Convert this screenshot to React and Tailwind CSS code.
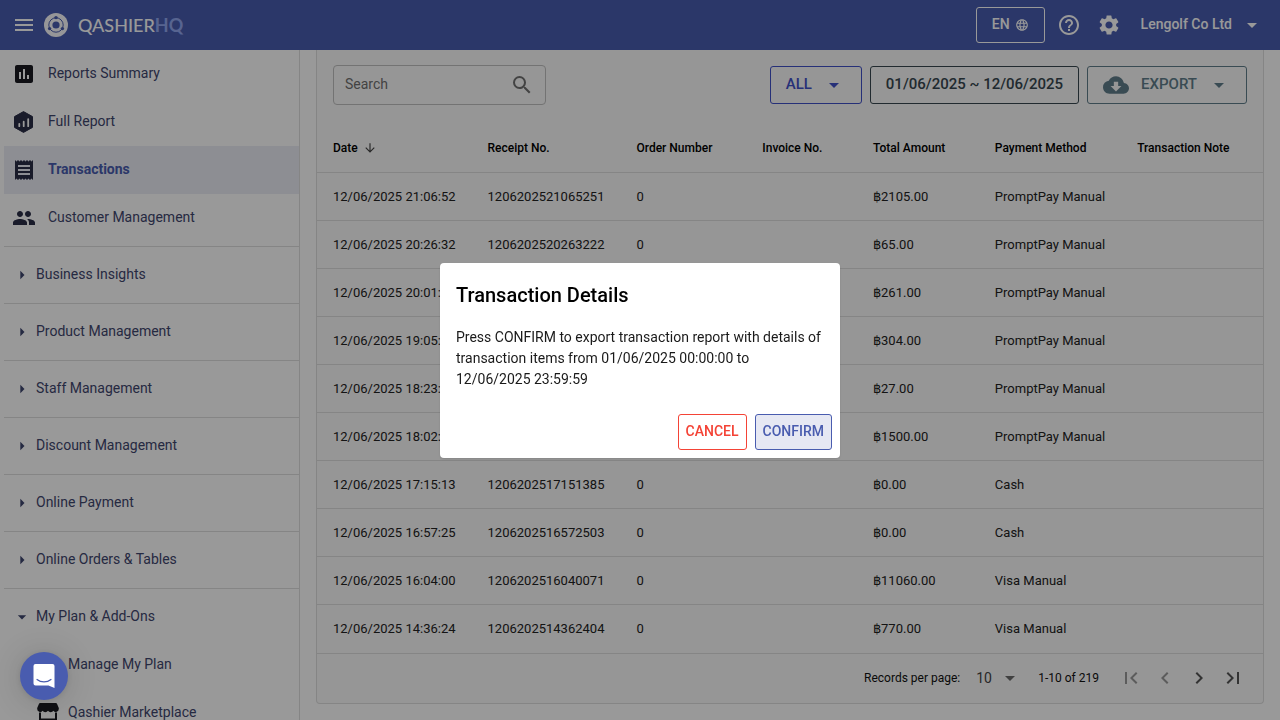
import {
  MdMenu, MdHelpOutline, MdSettings, MdArrowDropDown, MdArrowRight, MdLanguage, MdCloudDownload,
  MdSearch, MdArrowDownward, MdChevronLeft, MdChevronRight, MdFirstPage, MdLastPage,
  MdReceipt, MdPeople, MdAssessment,
} from "react-icons/md";

const rows = [
  ["12/06/2025 21:06:52", "1206202521065251", "0", "", "฿2105.00", "PromptPay Manual", ""],
  ["12/06/2025 20:26:32", "1206202520263222", "0", "", "฿65.00", "PromptPay Manual", ""],
  ["12/06/2025 20:01:44", "1206202520014418", "0", "", "฿261.00", "PromptPay Manual", ""],
  ["12/06/2025 19:05:12", "1206202519051237", "0", "", "฿304.00", "PromptPay Manual", ""],
  ["12/06/2025 18:23:36", "1206202518233640", "0", "", "฿27.00", "PromptPay Manual", ""],
  ["12/06/2025 18:02:20", "1206202518022061", "0", "", "฿1500.00", "PromptPay Manual", ""],
  ["12/06/2025 17:15:13", "1206202517151385", "0", "", "฿0.00", "Cash", ""],
  ["12/06/2025 16:57:25", "1206202516572503", "0", "", "฿0.00", "Cash", ""],
  ["12/06/2025 16:04:00", "1206202516040071", "0", "", "฿11060.00", "Visa Manual", ""],
  ["12/06/2025 14:36:24", "1206202514362404", "0", "", "฿770.00", "Visa Manual", ""],
];

const columns = ["Date", "Receipt No.", "Order Number", "Invoice No.", "Total Amount", "Payment Method", "Transaction Note"];

function HexReportIcon() {
  return (
    <svg viewBox="0 0 24 24" className="size-6 shrink-0" fill="none" aria-hidden="true">
      <path d="M11.5 1.600 20.500 6.600v10.800L11.500 22.400 2.500 17.400V6.600z" fill="#2a2d46" stroke="#2a2d46" strokeWidth="1" strokeLinejoin="round" />
      <path d="M7.300 13.800v2.400M11.700 11.700v4.500M16.200 9.200v7" stroke="#fff" strokeWidth="1.800" strokeLinecap="round" />
    </svg>
  );
}

function StoreIcon() {
  return (
    <svg viewBox="0 0 24 24" className="size-6 shrink-0" fill="#191a20" aria-hidden="true">
      <path d="M4.200 2h15.600c.6 0 1.100.3 1.300.9L22.800 7v1a3 3 0 0 1-5.400 1.800 3.200 3.200 0 0 1-5.400 0 3.200 3.200 0 0 1-5.400 0A3 3 0 0 1 1.200 8V7l1.700-4.100c.2-.6.7-.9 1.300-.9z" />
      <path d="M3 11.500h2v6h14v-6h2V22H3z" />
    </svg>
  );
}

function LogoMark() {
  return (
    <svg viewBox="0 0 24 24" className="size-6" aria-hidden="true">
      <circle cx="12" cy="12" r="12" fill="#fbfbfd" />
      <circle cx="12" cy="12" r="7.200" fill="none" stroke="#495caf" strokeWidth="1" />
      <circle cx="12" cy="12" r="3.600" fill="#495caf" />
      <circle cx="12" cy="4.600" r="1.700" fill="#495caf" />
      <circle cx="5.600" cy="15.600" r="1.700" fill="#495caf" />
      <circle cx="18.400" cy="15.600" r="1.700" fill="#495caf" />
    </svg>
  );
}

function NavItem({ icon, label, active, nested }) {
  return (
    <a
      href="#"
      aria-current={active ? "page" : undefined}
      className={`flex h-12 items-center pl-2 text-sm leading-5 ${nested ? "gap-2" : "gap-3"} ${active ? "bg-[#ebedf5] font-bold text-[#495caf]" : "text-[#3f466e]"}`}
    >
      {icon}
      <span className="pb-0.5">{label}</span>
    </a>
  );
}

function NavGroup({ label, open, children }) {
  return (
    <div className="border-t border-[#dedede] py-1">
      <button type="button" aria-expanded={!!open} className="flex h-12 w-full items-center gap-1 pl-2 text-sm leading-5 text-[#3f466e]">
        {open ? <MdArrowDropDown className="size-5" /> : <MdArrowRight className="size-5" />}
        <span className="pb-0.5">{label}</span>
      </button>
      {children}
    </div>
  );
}

function Header() {
  return (
    <header className="flex h-[50px] shrink-0 items-center justify-between bg-[#495caf] pr-4 pl-3 text-white">
      <div className="flex items-center">
        <button type="button" aria-label="Menu"><MdMenu className="size-6" /></button>
        <a href="#" className="flex items-center gap-[10px] pl-2 font-['Lato',sans-serif] text-lg font-medium">
          <LogoMark />
          <span>QASHIER<b className="text-[#91a7f0]">HQ</b></span>
        </a>
      </div>
      <div className="flex items-center gap-4 text-sm font-medium">
        <button type="button" className="flex h-9 items-center gap-[5px] rounded-[3px] border border-white px-[15px]">
          <span className="pb-0.5">EN</span> <MdLanguage className="size-[14px]" />
        </button>
        <button type="button" aria-label="Help" className="-ml-1"><MdHelpOutline className="size-6" /></button>
        <button type="button" aria-label="Settings"><MdSettings className="size-6" /></button>
        <button type="button" className="flex items-center gap-2 pl-1">
          <span className="pb-0.5">Lengolf Co Ltd</span> <MdArrowDropDown className="size-6" />
        </button>
      </div>
    </header>
  );
}

function Sidebar() {
  return (
    <nav className="w-[300px] shrink-0 overflow-hidden border-r border-[#dedede] bg-white pl-1">
      <div className="pb-1">
        <NavItem icon={<MdAssessment className="size-6 text-[#191a20]" />} label="Reports Summary" />
        <NavItem icon={<HexReportIcon />} label="Full Report" />
        <NavItem active icon={<MdReceipt className="size-6 text-[#2a2d46]" />} label="Transactions" />
        <NavItem icon={<MdPeople className="size-6 text-[#2a2d46]" />} label="Customer Management" />
      </div>
      <NavGroup label="Business Insights" />
      <NavGroup label="Product Management" />
      <NavGroup label="Staff Management" />
      <NavGroup label="Discount Management" />
      <NavGroup label="Online Payment" />
      <NavGroup label="Online Orders & Tables" />
      <NavGroup label="My Plan & Add-Ons" open>
        <div className="pl-6">
          <NavItem nested icon={<MdSettings className="size-6" />} label="Manage My Plan" />
          <NavItem nested icon={<StoreIcon />} label="Qashier Marketplace" />
        </div>
      </NavGroup>
    </nav>
  );
}

function Toolbar() {
  return (
    <div className="flex items-center justify-between px-4 pt-[15px] pb-[19px]">
      <label className="flex h-10 w-[213px] items-center justify-between rounded border border-[#c0c0c0] px-[11px] text-sm">
        <input type="search" aria-label="Search" placeholder="Search" className="w-32 bg-transparent pb-0.5 outline-none placeholder:text-[#707070]" />
        <MdSearch className="size-6 text-[#707070]" />
      </label>
      <div className="flex gap-2 text-[15px] font-medium">
        <button type="button" aria-haspopup="menu" className="flex h-[38px] items-center gap-[10px] rounded-[3px] border border-[#4050c8] px-[15px] text-[#4050c8]">
          <span className="pb-0.5">ALL</span> <MdArrowDropDown className="size-6" />
        </button>
        <button type="button" className="flex h-[38px] items-center rounded-[3px] border border-[#37474f] px-[15px] text-[#37474f]">
          <span className="pb-0.5">01/06/2025 ~ 12/06/2025</span>
        </button>
        <button type="button" aria-haspopup="menu" className="flex h-[38px] items-center rounded-[3px] border border-[#607d8b] px-[15px] text-[#607d8b]">
          <MdCloudDownload className="size-[26px]" />
          <span className="pr-[10px] pb-0.5 pl-3">EXPORT</span>
          <MdArrowDropDown className="size-6" />
        </button>
      </div>
    </div>
  );
}

function TransactionsTable() {
  return (
    <table className="mb-px w-full border-separate border-spacing-0 text-left whitespace-nowrap text-black">
      <colgroup>
        <col className="w-[154px]" />
        <col className="w-[149px]" />
        <col className="w-[126px]" />
        <col className="w-[111px]" />
        <col className="w-[122px]" />
        <col className="w-[142px]" />
        <col className="w-[142px]" />
      </colgroup>
      <thead>
        <tr className="h-12 text-xs">
          {columns.map((c, i) => (
            <th key={c} scope="col" className="px-4 font-medium">
              {i === 0 ? (
                <button type="button" className="flex items-center gap-[5px]">
                  {c} <MdArrowDownward className="size-[14px] text-[#444]" />
                </button>
              ) : c}
            </th>
          ))}
        </tr>
      </thead>
      <tbody>
        {rows.map((r) => (
          <tr key={r[1]} className="h-12 text-[13px]">
            {r.map((v, i) => (
              <td key={columns[i]} className="border-t border-[#dedede] px-4 text-[#222]">{v}</td>
            ))}
          </tr>
        ))}
      </tbody>
    </table>
  );
}

function Pager() {
  return (
    <div className="flex h-[50px] items-center justify-end border-t border-[#dedede] pr-[18px] pb-0.5 text-xs text-[#111]">
      <label htmlFor="per-page">Records per page:</label>
      <div className="relative ml-4 flex items-center">
        <select id="per-page" defaultValue="10" className="w-11 appearance-none bg-transparent text-sm text-[#444]">
          <option>10</option>
          <option>20</option>
          <option>50</option>
        </select>
        <MdArrowDropDown className="pointer-events-none absolute right-[-2px] size-6 text-[#6b6b6b]" />
      </div>
      <span className="ml-[18px]">1-10 of 219</span>
      <div className="ml-5 flex items-center gap-[10px] text-[#555]">
        <button type="button" disabled aria-label="First page" className="text-[#999]"><MdFirstPage className="size-6" /></button>
        <button type="button" disabled aria-label="Previous page" className="text-[#999]"><MdChevronLeft className="size-6" /></button>
        <button type="button" aria-label="Next page"><MdChevronRight className="size-6" /></button>
        <button type="button" aria-label="Last page"><MdLastPage className="size-6" /></button>
      </div>
    </div>
  );
}

function ConfirmDialog() {
  return (
    <div className="fixed inset-0 flex items-center justify-center bg-black/40">
      <section role="dialog" aria-modal="true" aria-labelledby="dialog-title" className="w-[400px] rounded bg-white text-black shadow-sm">
        <h2 id="dialog-title" className="px-4 pt-4 text-xl leading-8 font-medium">Transaction Details</h2>
        <p className="p-4 text-sm leading-[21px] text-[#1a1a1a]">
          Press CONFIRM to export transaction report with details of transaction items from 01/06/2025 00:00:00 to 12/06/2025 23:59:59
        </p>
        <div className="flex justify-end gap-2 p-2 text-sm font-medium">
          <button type="button" className="h-9 rounded-[3px] border border-[#f44336] px-[7px] pb-0.5 text-[#f44336]">CANCEL</button>
          <button type="button" className="h-9 rounded-[3px] border border-[#495caf] bg-[#e6e8f3] px-[7px] pb-0.5 text-[#495caf]">CONFIRM</button>
        </div>
      </section>
    </div>
  );
}

export default function App() {
  return (
    <div className="flex h-screen flex-col overflow-hidden bg-white font-['Roboto',sans-serif]">
      <Header />
      <div className="flex min-h-0 grow">
        <Sidebar />
        <main className="min-w-0 grow overflow-hidden px-4">
          <div className="rounded-b border border-t-0 border-[#dedede] bg-[#fafafa]">
            <Toolbar />
            <TransactionsTable />
            <Pager />
          </div>
        </main>
      </div>
      <ConfirmDialog />
      <button type="button" aria-label="Open chat" className="fixed bottom-5 left-5 flex size-12 items-center justify-center rounded-full bg-[#495caf] shadow-[0_1px_6px_rgba(0,0,0,0.1),0_2px_32px_rgba(0,0,0,0.16)]">
        <svg viewBox="0 0 24 26" className="h-[26px] w-6" aria-hidden="true">
          <path d="M3.500 1h17a2 2 0 0 1 2 2V25l-6-2.500H3.500A2 2 0 0 1 1.500 20.500V3A2 2 0 0 1 3.500 1z" fill="#fff" />
          <path d="M5 16.500c4 3.200 10 3.200 14 0" fill="none" stroke="#495caf" strokeWidth="1.200" strokeLinecap="round" />
        </svg>
      </button>
    </div>
  );
}
